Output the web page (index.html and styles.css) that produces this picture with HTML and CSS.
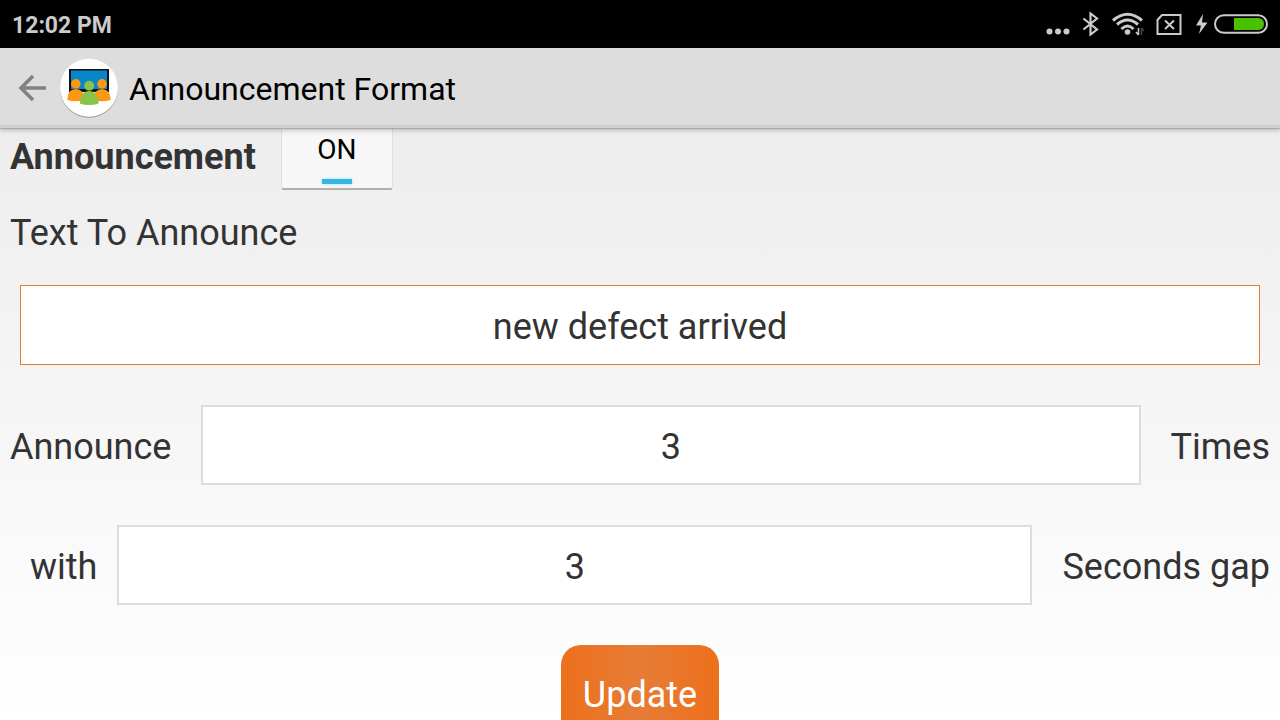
FILE: index.html
```html
<!DOCTYPE html>
<html lang="en">
<head>
<meta charset="utf-8">
<meta name="viewport" content="width=device-width, initial-scale=1">
<title>Announcement Format</title>
<link rel="stylesheet" href="styles.css">
</head>
<body>
<div class="status-bar">
  <span class="clock">12:02 PM</span>
  <svg class="status-icons" width="226" height="48" viewBox="0 0 226 48" fill="none" stroke="#cbcbcb" aria-hidden="true">
    <g fill="#cbcbcb" stroke="none"><circle cx="3.500" cy="31.500" r="3"/><circle cx="12" cy="31.500" r="3"/><circle cx="20.500" cy="31.500" r="3"/></g>
    <path stroke-width="2.200" d="M37.500 18.500 51 29.500 44.500 34.500V13.500L51 18.500 37.500 29.500"/>
    <g stroke-width="3"><path d="M67 20.500Q81.500 8 96 20.500"/><path d="M71 24.500Q81.500 15.500 92 24.500"/><path d="M75.500 29Q81.500 23 87.500 29"/></g>
    <circle cx="81.500" cy="32" r="2.800" fill="#cbcbcb" stroke="none"/>
    <path stroke="#000" stroke-width="7" d="M93 27V36"/>
    <path stroke-width="1.500" d="M92.500 28V35M90 32 92.500 35"/><path stroke="#444" stroke-width="1.500" d="M95.500 28V35M95.500 28 98 31"/>
    <path stroke-width="2" d="M116 15H134.500V34H111.500V20Z"/>
    <path stroke-width="2" d="M119 20.500 128 29M128 20.500 119 29"/>
    <path fill="#cbcbcb" stroke="none" d="M157 14 150 25.500H155L153 34 161.500 22.500H156Z"/>
    <rect x="169" y="15.200" width="52" height="17.600" rx="8.800" stroke-width="2"/>
    <path fill="#49c100" stroke="none" d="M188 18H213Q218 19 218 24T213 30H188Z"/>
  </svg>
</div>
<header class="action-bar">
  <button class="back" type="button" aria-label="Back">
    <svg width="30" height="28" viewBox="0 0 30 28" fill="none" stroke="#808080" stroke-width="3.500"><path d="M29 14H4M16 2 4 14 16 26"/></svg>
  </button>
  <svg class="app-icon" width="60" height="60" viewBox="0 0 60 60" aria-hidden="true">
    <circle cx="30" cy="30.800" r="29" fill="#000" opacity=".3"/>
    <circle cx="30" cy="29.800" r="29" fill="#fff"/>
    <path fill="#111" d="M10 11H50V34H10Z"/>
    <path fill="#0985ca" d="M12 12.500H48V31H12Z"/>
    <g fill="#fc9813"><circle cx="16.800" cy="25.800" r="4.800"/><path d="M8.300 42Q8.500 31 16.800 31T25.500 42Q17 44.500 8.300 42Z"/><circle cx="43" cy="25.800" r="4.800"/><path d="M34.500 42Q35 31 43 31T51.800 42Q43 44.500 34.500 42Z"/></g>
    <g fill="#8bc34a"><circle cx="30.200" cy="27.800" r="5"/><path d="M20.800 45.500Q21.500 33 30.200 33T39.600 45.500Q30 48.500 20.800 45.500Z"/></g>
  </svg>
  <h1 class="title">Announcement Format</h1>
</header>
<main class="content">
  <form class="form">
    <div class="toggle-row">
      <span class="toggle-label" id="announcement-label">Announcement</span>
      <button class="toggle" type="button" aria-pressed="true" aria-labelledby="announcement-label">ON</button>
    </div>
    <label class="message-label" for="message">Text To Announce</label>
    <input class="field message" id="message" type="text" value="new defect arrived">
    <div class="row times-row">
      <label class="label" for="times">Announce</label>
      <input class="field" id="times" type="text" inputmode="numeric" value="3">
      <span class="label">Times</span>
    </div>
    <div class="row gap-row">
      <label class="label" for="gap">with</label>
      <input class="field" id="gap" type="text" inputmode="numeric" value="3">
      <span class="label">Seconds gap</span>
    </div>
    <button class="update" type="button">Update</button>
  </form>
</main>
</body>
</html>
```
FILE: styles.css
```css
* {
  box-sizing: border-box;
}

body {
  margin: 0;
  height: 100vh;
  overflow: hidden;
  display: flex;
  flex-direction: column;
  font-family: Roboto, "Noto Sans", sans-serif;
  color: #333;
  background: linear-gradient(#e9e9e9, #fff);
}

button,
input {
  font: inherit;
  color: inherit;
  margin: 0;
}

.status-bar {
  flex: none;
  height: 48px;
  padding-left: 12px;
  display: flex;
  align-items: center;
  justify-content: space-between;
  background: #000;
  color: #cbcbcb;
}

.clock {
  font-size: 23px;
  font-weight: 700;
  line-height: 28px;
  padding-top: 3px;
}

.status-icons {
  margin-right: 8px;
}

.action-bar {
  flex: none;
  z-index: 1;
  height: 81px;
  padding-left: 17px;
  display: flex;
  align-items: center;
  background: #ddd;
  border-bottom: 1px solid #a9a9a9;
  box-shadow: inset 0 -3px #d0d0d0, 0 1px 5px rgba(0, 0, 0, 0.25);
}

.back {
  display: flex;
  padding: 0;
  border: 0;
  background: none;
}

.app-icon {
  margin-left: 12px;
}

.title {
  margin: 0 0 0 10px;
  padding-top: 2px;
  font-size: 32px;
  font-weight: 400;
  line-height: 40px;
  color: #000;
}

.content {
  flex: 1;
  min-height: 0;
  overflow: hidden;
  font-size: 36px;
  line-height: 42px;
}

.form {
  display: flex;
  flex-direction: column;
}

.toggle-row {
  display: flex;
  align-items: flex-start;
  gap: 25px;
  padding-left: 10px;
}

.toggle-label {
  font-weight: 700;
  padding-top: 7px;
}

.toggle {
  width: 112px;
  height: 61px;
  padding: 0;
  display: flex;
  flex-direction: column;
  align-items: center;
  border: 1px solid #e0e0e0;
  border-top: 0;
  border-bottom: 2px solid #b0b0b0;
  border-radius: 0 0 3px 3px;
  background: #f7f7f7;
  color: #000;
  font-size: 28px;
  line-height: 42px;
}

.toggle::after {
  content: "";
  width: 30px;
  height: 5px;
  margin-top: 8px;
  background: #33b5e5;
  box-shadow: 0 0 3px #9fdcf3;
}

.message-label {
  margin: 22px 10px 31px;
}

.field {
  flex: 1;
  min-width: 0;
  height: 80px;
  padding: 4px 10px 0;
  border: 2px solid #dadee2;
  border-radius: 0;
  background: #fff;
  text-align: center;
  outline: 0;
}

.message {
  flex: none;
  margin: 0 20px;
  border: 1px solid #e6772e;
}

.row {
  display: flex;
  align-items: center;
  margin-top: 40px;
  padding: 0 10px;
  gap: 30px;
}

.gap-row {
  padding-left: 30px;
}

.gap-row .field {
  margin-left: -10px;
}

.label {
  padding-top: 4px;
}

.update {
  align-self: center;
  margin-top: 40px;
  padding: 29px 22px;
  border: 0;
  border-radius: 20px;
  background: linear-gradient(90deg, #ee701b, #e67c35 50%, #ee701b);
  color: #fff;
}
```
